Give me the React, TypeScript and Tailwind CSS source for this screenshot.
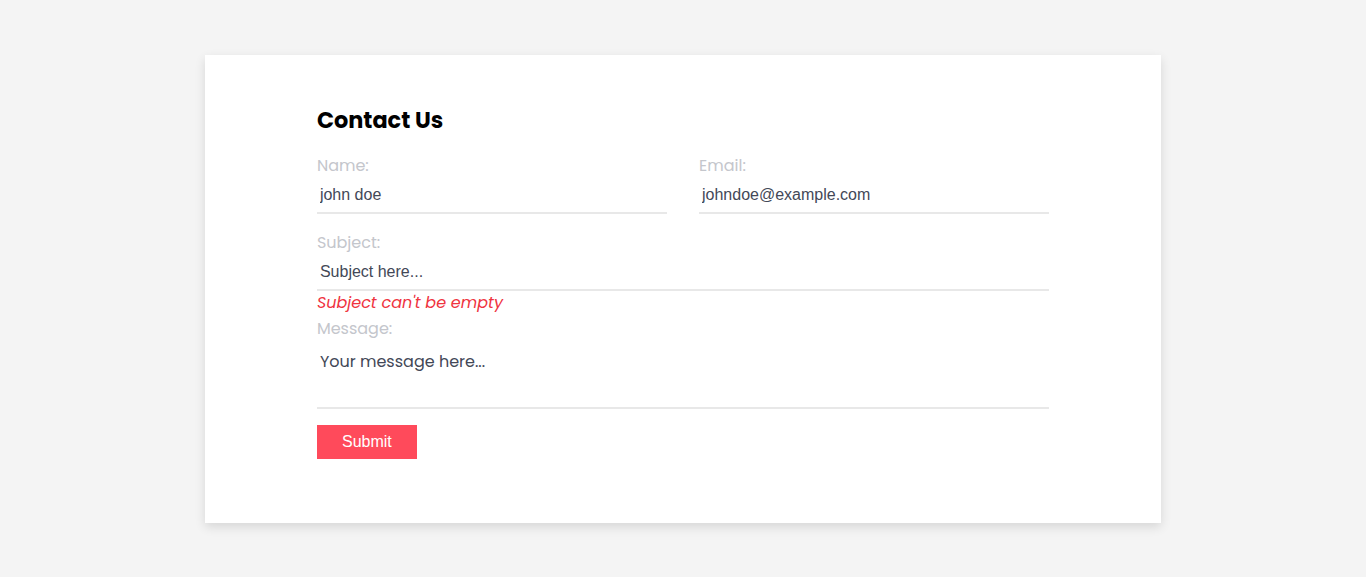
import { useState } from 'react'

const poppins = { fontFamily: '"Poppins", "Open Sans", sans-serif' }

export default function App() {
  const [name, setName] = useState('john doe')
  const [email, setEmail] = useState('johndoe@example.com')

  return (
    <div className="flex min-h-screen items-center justify-center bg-[#f4f4f4]">
      <div className="w-[70%] bg-white px-[112px] pb-[64px] pt-[50px] shadow-[0_4px_10px_rgba(0,0,0,0.12)]">
        <form className="flex flex-col font-['Poppins','Open_Sans',sans-serif]" onSubmit={(e) => e.preventDefault()}>
          <h2 className="text-[22.4px] font-bold leading-[30px] text-black">Contact Us</h2>

          <div className="mt-[19px] grid grid-cols-2 gap-8">
            <label className="flex flex-col">
              <span className="text-base leading-[23px] text-[#c4c6cc]">Name:</span>
              <input
                value={name}
                onChange={(e) => setName(e.target.value)}
                className="h-[37px] border-b-2 border-[#e8e8e8] px-[3px] pt-[2px] font-['Liberation_Sans',Arial,sans-serif] text-base text-[#434857] outline-none"
              />
            </label>
            <label className="flex flex-col">
              <span className="text-base leading-[23px] text-[#c4c6cc]">Email:</span>
              <input
                value={email}
                onChange={(e) => setEmail(e.target.value)}
                className="h-[37px] border-b-2 border-[#e8e8e8] px-[3px] pt-[2px] font-['Liberation_Sans',Arial,sans-serif] text-base text-[#434857] outline-none"
              />
            </label>
          </div>

          <label className="mt-[17px] flex flex-col">
            <span className="text-base leading-[23px] text-[#c4c6cc]">Subject:</span>
            <input
              placeholder="Subject here..."
              className="h-[37px] border-b-2 border-[#e8e8e8] px-[3px] pt-[2px] font-['Liberation_Sans',Arial,sans-serif] text-base text-[#434857] outline-none placeholder:text-[#434857]"
            />
          </label>
          <p className="text-base italic leading-6 text-[#ef3340]">Subject can't be empty</p>

          <label className="mt-[2px] flex flex-col">
            <span className="text-base leading-[23px] text-[#c4c6cc]">Message:</span>
            <textarea
              placeholder="Your message here..."
              style={poppins}
              className="h-[69px] resize-none border-b-2 border-[#e8e8e8] px-[3px] pt-[10px] text-base leading-6 text-[#434857] outline-none placeholder:text-[#434857]"
            />
          </label>

          <button
            type="submit"
            className="mt-4 h-[34px] w-[100px] bg-[#ff4a5b] font-['Liberation_Sans',Arial,sans-serif] text-base text-white"
          >
            Submit
          </button>
        </form>
      </div>
    </div>
  )
}
